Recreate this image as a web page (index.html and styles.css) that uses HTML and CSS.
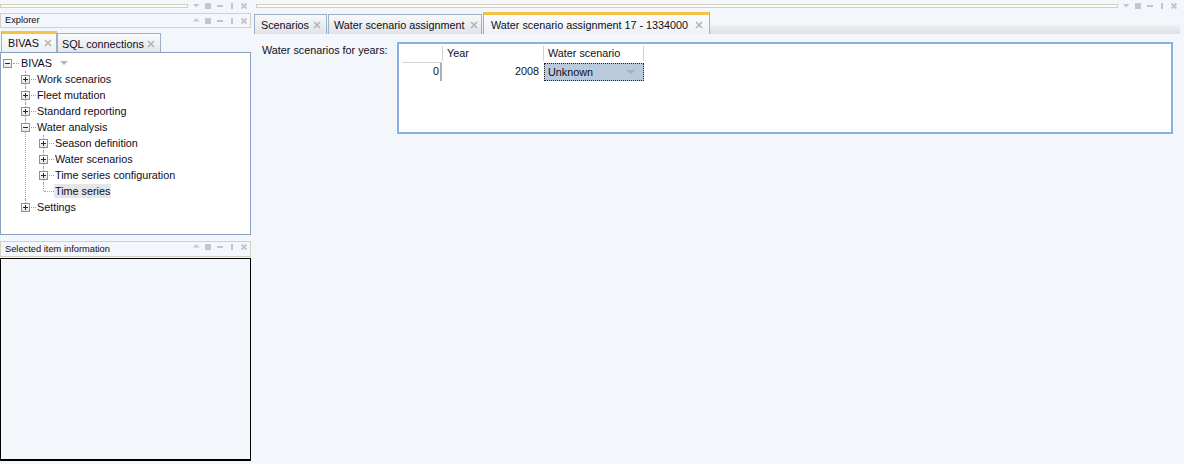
FILE: index.html
```html
<!DOCTYPE html>
<html>
<head>
<meta charset="utf-8">
<title>BIVAS</title>
<link rel="stylesheet" href="styles.css">
</head>
<body>
<div class="app">
  <aside class="left">
    <div class="strip">
      <div class="strip-line"></div>
      <svg class="icons" width="56" height="10" viewBox="0 0 56 10"><g fill="#c3c5c9"><polygon points="0,2 6.5,2 3.25,5.5"/><rect x="12" y="1" width="6" height="6"/><rect x="24" y="3" width="6" height="2"/><rect x="38" y="1" width="2" height="6"/></g><path d="M48.5 1.5l5 5m0-5l-5 5" stroke="#c3c5c9" stroke-width="1.8" fill="none"/></svg>
    </div>
    <div class="pane-head explorer-head">
      <span class="pane-title">Explorer</span>
      <svg class="icons" width="56" height="10" viewBox="0 0 56 10"><g fill="#c3c5c9"><polygon points="0,4.5 6.5,4.5 3.25,1.2"/><rect x="12" y="1" width="6" height="6"/><rect x="24" y="3" width="6" height="2"/><rect x="38" y="1" width="2" height="6"/></g><path d="M48.5 1.5l5 5m0-5l-5 5" stroke="#c3c5c9" stroke-width="1.8" fill="none"/></svg>
    </div>
    <div class="doc-tabs">
      <div class="dtab dtab-active dtab-bivas"><span>BIVAS</span><svg class="tx" width="8" height="8" viewBox="0 0 8 8"><path d="M1 1l6 6m0-6l-6 6" stroke="#b5b5b5" stroke-width="1.7"/></svg></div>
      <div class="dtab dtab-sql"><span>SQL connections</span><svg class="tx" width="8" height="8" viewBox="0 0 8 8"><path d="M1 1l6 6m0-6l-6 6" stroke="#b5b5b5" stroke-width="1.7"/></svg></div>
    </div>
    <div class="tree-panel">
      <ul class="tree">
        <li class="root">
          <div class="row r0"><i class="box minus"></i><span class="conn c0"></span><span class="label">BIVAS</span><svg class="dd" width="8" height="4" viewBox="0 0 8 4"><polygon points="0,0 8,0 4,4" fill="#b4b4b4"/></svg></div>
          <ul>
            <li class="l1"><div class="row r1"><i class="box plus"></i><span class="conn"></span><span class="label">Work scenarios</span></div></li>
            <li class="l1"><div class="row r1"><i class="box plus"></i><span class="conn"></span><span class="label">Fleet mutation</span></div></li>
            <li class="l1"><div class="row r1"><i class="box plus"></i><span class="conn"></span><span class="label">Standard reporting</span></div></li>
            <li class="l1"><div class="row r1"><i class="box minus"></i><span class="conn"></span><span class="label">Water analysis</span></div>
              <ul>
                <li class="l2"><div class="row r2"><i class="box plus"></i><span class="conn"></span><span class="label">Season definition</span></div></li>
                <li class="l2"><div class="row r2"><i class="box plus"></i><span class="conn"></span><span class="label">Water scenarios</span></div></li>
                <li class="l2"><div class="row r2"><i class="box plus"></i><span class="conn"></span><span class="label">Time series configuration</span></div></li>
                <li class="l2 last"><div class="row r2 leaf"><span class="conn leaf-conn"></span><span class="label sel">Time series</span></div></li>
              </ul>
            </li>
            <li class="l1 last"><div class="row r1"><i class="box plus"></i><span class="conn"></span><span class="label">Settings</span></div></li>
          </ul>
        </li>
      </ul>
    </div>
    <div class="pane-head info-head">
      <span class="pane-title">Selected item information</span>
      <svg class="icons" width="56" height="10" viewBox="0 0 56 10"><g fill="#c3c5c9"><polygon points="0,4.5 6.5,4.5 3.25,1.2"/><rect x="12" y="1" width="6" height="6"/><rect x="24" y="3" width="6" height="2"/><rect x="38" y="1" width="2" height="6"/></g><path d="M48.5 1.5l5 5m0-5l-5 5" stroke="#c3c5c9" stroke-width="1.8" fill="none"/></svg>
    </div>
    <div class="info-panel"></div>
  </aside>

  <main class="right">
    <div class="strip">
      <div class="strip-line"></div>
      <svg class="icons" width="56" height="10" viewBox="0 0 56 10"><g fill="#c3c5c9"><polygon points="0,2 6.5,2 3.25,5.5"/><rect x="12" y="1" width="6" height="6"/><rect x="24" y="3" width="6" height="2"/><rect x="38" y="1" width="2" height="6"/></g><path d="M48.5 1.5l5 5m0-5l-5 5" stroke="#c3c5c9" stroke-width="1.8" fill="none"/></svg>
    </div>
    <div class="tabs">
      <div class="tab tab-scen"><span>Scenarios</span><svg class="tx" width="8" height="8" viewBox="0 0 8 8"><path d="M1 1l6 6m0-6l-6 6" stroke="#b5b5b5" stroke-width="1.7"/></svg></div>
      <div class="tab tab-wsa"><span>Water scenario assignment</span><svg class="tx" width="8" height="8" viewBox="0 0 8 8"><path d="M1 1l6 6m0-6l-6 6" stroke="#b5b5b5" stroke-width="1.7"/></svg></div>
      <div class="tab tab-active tab-wsa17"><span>Water scenario assignment 17 - 1334000</span><svg class="tx" width="8" height="8" viewBox="0 0 8 8"><path d="M1 1l6 6m0-6l-6 6" stroke="#b5b5b5" stroke-width="1.7"/></svg></div>
    </div>
    <div class="content">
      <div class="field-label">Water scenarios for years:</div>
      <div class="grid">
        <div class="grid-head">
          <div class="hc hc-rh"></div>
          <div class="hc hc-year">Year</div>
          <div class="hc hc-ws">Water scenario</div>
        </div>
        <div class="grid-row">
          <div class="rc rc-rh">0</div>
          <div class="rc rc-year">2008</div>
          <div class="rc rc-ws"><span>Unknown</span><svg class="ws-dd" width="10" height="4" viewBox="0 0 10 4"><polygon points="0,0 10,0 5,4" fill="#a3b1c2"/></svg></div>
        </div>
      </div>
    </div>
  </main>
</div>
</body>
</html>
```

FILE: styles.css
```css
* { box-sizing: border-box; }
html, body { margin: 0; padding: 0; }
body {
  background: #f3f6fb;
  font-family: "Liberation Sans", Arial, sans-serif;
  font-size: 10.8px;
  color: #0e0e22;
  width: 1184px;
  height: 464px;
  overflow: hidden;
}
.app { display: flex; height: 464px; }

/* columns */
.left { width: 251px; flex: none; display: flex; flex-direction: column; }
.right { width: 930px; margin-left: 3px; flex: none; display: flex; flex-direction: column; }

/* top thin strips */
.strip { height: 13px; display: flex; align-items: flex-start; flex: none; }
.right .strip { height: 12px; }
.strip-line {
  flex: 1;
  height: 4px;
  margin-top: 4px;
  margin-right: 5px;
  border: 1px solid #d5cfbd;
  background: #fbfbfb;
}
.right .strip-line { margin-left: 2px; }
.icons { flex: none; display: block; }
.strip .icons { margin-top: 2px; margin-right: 2px; }
.right .strip .icons { margin-right: 5px; }

/* pane headers */
.pane-head {
  flex: none;
  display: flex;
  align-items: flex-start;
  border: 1px solid #d6d0bf;
  padding-left: 4px;
  font-size: 9.3px;
  color: #0c0c18;
}
.pane-title { flex: 1; }
.pane-head .icons { margin-right: 1px; }
.explorer-head { height: 15px; line-height: 13px; }
.explorer-head .icons { margin-top: 3px; }
.info-head { height: 16px; line-height: 14px; margin-top: 6px; }
.info-head .icons { margin-top: 1px; }

/* explorer document tabs */
.doc-tabs {
  flex: none;
  height: 21px;
  margin-top: 3px;
  display: flex;
  align-items: flex-end;
}
.dtab {
  display: flex;
  align-items: center;
  justify-content: space-between;
  height: 19px;
  border: 1px solid #9db0c8;
  border-bottom: none;
  background: linear-gradient(#f9fafb, #e2e5e9);
  font-size: 10.8px;
}
.dtab-active {
  height: 21px;
  border-top: 3px solid #f6c244;
  background: linear-gradient(#fdfdfe, #eceff3);
}
.dtab-bivas { width: 56px; margin-left: 1px; padding: 0 4px 0 6px; }
.dtab-sql { width: 104px; padding: 1px 5px 0 4px; }
.tx { flex: none; display: block; }

/* tree */
.tree-panel {
  flex: none;
  height: 183px;
  border: 1px solid #8ba0be;
  background: #ffffff;
  padding-top: 2px;
}
.tree, .tree ul { list-style: none; margin: 0; padding: 0; }
.tree li { position: relative; }
.tree li.l1::before,
.tree li.l2::before {
  content: "";
  position: absolute;
  top: 0;
  bottom: 0;
  border-left: 1px dotted #a0a0a0;
}
.tree li.l1::before { left: 24px; }
.tree li.l2::before { left: 42px; }
.tree li.last::before { bottom: auto; height: 8px; }

.row { height: 16px; display: flex; align-items: center; position: relative; }
.box {
  flex: none;
  width: 9px;
  height: 9px;
  border: 1px solid #8395ae;
  background: linear-gradient(#ffffff, #e3e7ed);
  position: relative;
  z-index: 1;
}
.box::before {
  content: "";
  position: absolute;
  left: 1px;
  top: 3px;
  width: 5px;
  height: 1px;
  background: #1f2b3d;
}
.box.plus::after {
  content: "";
  position: absolute;
  left: 3px;
  top: 1px;
  width: 1px;
  height: 5px;
  background: #1f2b3d;
}
.r0 .box { margin-left: 2px; }
.r1 .box { margin-left: 20px; }
.r2 .box { margin-left: 38px; }
.conn {
  flex: none;
  height: 0;
  width: 5px;
  margin-left: 1px;
  margin-right: 0;
  border-top: 1px dotted #a0a0a0;
}
.c0 { width: 6px; margin-right: 1px; }
.leaf-conn { margin-left: 43px; width: 10px; }
.label {
  line-height: 14px;
  padding: 0 1px;
  white-space: nowrap;
}
.sel { background: #e4e6ea; }
.dd { margin-left: 7px; display: block; }

/* info panel */
.info-panel {
  flex: none;
  height: 203px;
  margin-top: 1px;
  border: 1px solid #000;
  border-bottom-width: 2px;
  background: #f3f6fb;
}

/* right document tabs */
.tabs {
  flex: none;
  height: 22px;
  display: flex;
  align-items: flex-end;
  background: linear-gradient(to bottom, transparent 13px, #eef0f4 13px, #dcdfe4 22px);
  margin-right: 4px;
}
.tab {
  display: flex;
  align-items: center;
  justify-content: space-between;
  height: 20px;
  border: 1px solid #9bb0ca;
  border-bottom: none;
  background: linear-gradient(#f8f9fa, #e0e3e8);
  padding: 1px 5px 0 6px;
  margin-right: 1px;
  white-space: nowrap;
}
.tab-active {
  height: 22px;
  border-top: 3px solid #f6c244;
  background: linear-gradient(#fafbfc, #eef1f5);
  padding: 0 6px 0 7px;
}
.tab-scen { width: 73px; }
.tab-wsa { width: 154px; padding: 1px 3px 0 5px; }
.tab-wsa17 { width: 227px; }

/* content */
.content {
  flex: none;
  display: flex;
  padding-top: 8px;
}
.field-label {
  width: 143px;
  flex: none;
  padding-left: 8px;
  padding-top: 2px;
  line-height: 13px;
  white-space: nowrap;
}
.grid {
  width: 776px;
  height: 92px;
  flex: none;
  border: 2px solid #8db0e3;
  background: #ffffff;
  padding: 2px 0 0 3px;
}
.grid-head { display: flex; height: 15px; }
.hc {
  height: 15px;
  line-height: 14px;
  border-right: 1px solid #d6d2c4;
  padding-left: 4px;
  white-space: nowrap;
  box-shadow: 1px 0 0 #ffffff;
}
.hc-rh { width: 41px; }
.hc-year { width: 101px; }
.hc-ws { width: 100px; }

.grid-row { display: flex; margin-top: 1px; height: 19px; }
.rc { height: 19px; line-height: 17px; white-space: nowrap; }
.rc-rh {
  width: 40px;
  margin-right: 1px;
  border-top: 1px solid #d6d6d6;
  border-right: 2px solid #b0b0b0;
  text-align: right;
  padding-right: 1px;
}
.rc-year {
  width: 100px;
  margin-right: 1px;
  text-align: right;
  padding-right: 4px;
  padding-top: 1px;
}
.rc-ws {
  width: 100px;
  margin-top: 1px;
  height: 18px;
  border: 1px dotted #222;
  background: #b9cadc;
  display: flex;
  align-items: center;
  justify-content: space-between;
  padding: 0 7px 0 3px;
  line-height: 16px;
}
.ws-dd { display: block; }
```
